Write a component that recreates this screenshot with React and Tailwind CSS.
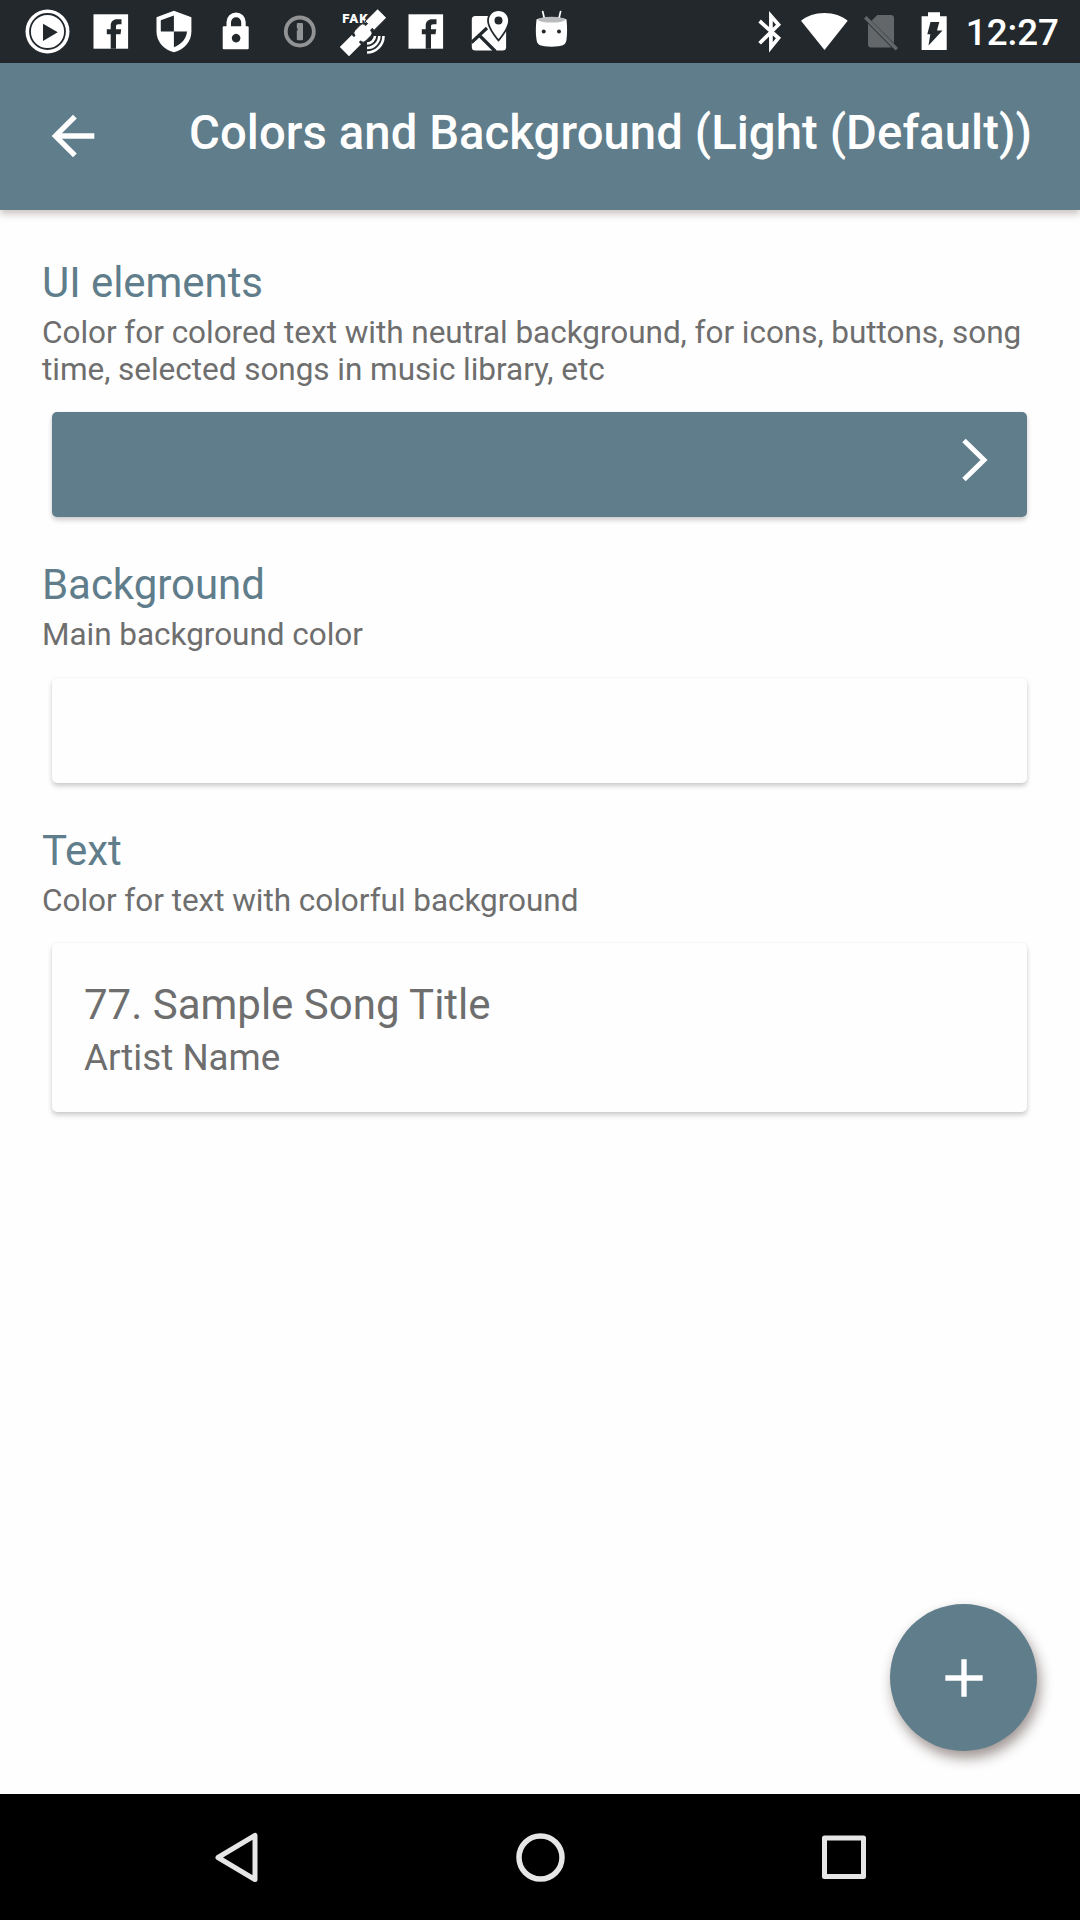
import React from "react";

// Status glyphs share the bar's coordinate space: x is the left edge of the slot.
function Glyph({ x, w = 63, className = "w-[63px]", children }) {
  return (
    <svg viewBox={`${x} 0 ${w} 63`} className={`h-[63px] shrink-0 ${className}`} fill="#fff">
      {children}
    </svg>
  );
}

function FacebookGlyph({ x }) {
  return (
    <Glyph x={x}>
      <g transform={`translate(${x + 14.5} 14.3)`}>
        <rect x="0" y="0" width="34.6" height="34.4" />
        <path
          d="M17.200 34.400V20H13.300v-5h3.900v-3.600c0-4.200 2.600-6.500 6.500-6.500h4.300v5h-3c-1.900 0-2.500.8-2.500 2.400V15h5.200l-.7 5h-4.500v14.400z"
          fill="#22282c"
        />
      </g>
    </Glyph>
  );
}

function StatusBar() {
  return (
    <div className="flex h-[63px] items-center bg-[#22282c] pl-[15.5px] pr-[21px]">
      <Glyph x={15.5}>
        <circle cx="47" cy="31.500" r="22" />
        <circle cx="47" cy="31.500" r="17.500" fill="none" stroke="#22282c" strokeWidth="1.800" />
        <path d="M42.500 23.700v17.200L57.300 32.300z" fill="#22282c" />
      </Glyph>
      <FacebookGlyph x={78.5} />
      <Glyph x={141.5}>
        <path d="M173.400 10.800 156 17.300v14.200c0 9.600 6.600 18 17.400 20.800 10.800-2.800 17.500-11.200 17.500-20.800V17.300z" />
        <path d="M173.400 15.600V31.600H160.300V20.300zM173.400 31.600h13.100c-.5 6.900-5.400 13-13.100 15.600z" fill="#22282c" />
      </Glyph>
      <Glyph x={204.5}>
        <path
          fillRule="evenodd"
          d="M226 26.300v-4.200a9.600 9.600 0 0 1 19.200 0v4.200h2a1 1 0 0 1 1 1v20.900a1 1 0 0 1-1 1h-24a1 1 0 0 1-1-1V27.300a1 1 0 0 1 1-1zm4.500 0h10.200v-4a5.100 5.100 0 0 0-10.200 0zM235.600 33.800a4.300 4.300 0 1 0 .01 0z"
        />
      </Glyph>
      <Glyph x={267.5}>
        <circle cx="299.300" cy="31.500" r="14" fill="none" stroke="#919395" strokeWidth="3.800" />
        <rect x="296.300" y="23" width="6.200" height="17.200" rx="1" fill="#919395" />
        <path d="M296.300 28.200v2.300" stroke="#22282c" strokeWidth="1.600" />
      </Glyph>
      <Glyph x={330.5}>
        <text x="341.700" y="23" fontSize="13.200" fontWeight="900" letterSpacing="1.100" fontFamily="Roboto, sans-serif">
          FAK
        </text>
        <g transform="translate(363 32.5) rotate(-45)">
          <rect x="-27" y="-6.500" width="17" height="13" />
          <rect x="9" y="-7" width="18" height="13" stroke="#22282c" strokeWidth="1" />
          <rect x="-8" y="-7.500" width="14.500" height="15" rx="3.500" stroke="#22282c" strokeWidth=".8" />
          <path d="M-11-3.500h4v7h-4zM5-3h5v6H5z" />
        </g>
        <g fill="none" stroke="#fff" strokeWidth="2.600">
          <path d="M366.500 43.500a8 8 0 0 0 8-7.500M366.500 48a12.300 12.300 0 0 0 12.300-12M366.500 52.500a16.500 16.500 0 0 0 16.500-16.500" />
        </g>
      </Glyph>
      <FacebookGlyph x={393.5} />
      <Glyph x={456.5}>
        <rect x="471.300" y="16" width="34.300" height="34.600" rx="3.500" />
        <path d="m471 42.500 15.500-14.500M479 35.500l16 16" fill="none" stroke="#22282c" strokeWidth="3.200" />
        <path
          d="M498 11c-5.500 0-9.600 4.200-9.600 9.500 0 7.500 9.600 18.500 9.600 18.500s9.600-11 9.600-18.500c0-5.300-4.100-9.500-9.600-9.500z"
          stroke="#22282c"
          strokeWidth="3.600"
          paintOrder="stroke"
        />
        <circle cx="498" cy="20.500" r="4" fill="#22282c" />
      </Glyph>
      <Glyph x={520}>
        <path d="M542.700 11.500 544.500 19M560.600 11.500 558.800 19" stroke="#fff" strokeWidth="1.700" strokeLinecap="round" />
        <path d="M536.500 19.500c5-3 25.500-3 30 0 .8 8 .8 14 0 20-.6 5.500-4 7.200-15 7.200s-14.400-1.700-15-7.200c-.9-6-.9-12 0-20z" />
        <ellipse cx="551.600" cy="19.700" rx="13.600" ry="2.900" fill="#b9bbbc" />
        <circle cx="543.700" cy="31.600" r="2" fill="#22282c" />
        <circle cx="559" cy="31.600" r="2" fill="#22282c" />
      </Glyph>

      <div className="ml-auto flex items-center">
        <Glyph x={756} w={28} className="mr-[14px] w-[28px]">
          <path
            d="m759.600 21 18.900 17-7.600 9.300V16l7.600 8.700-18.900 18.500"
            fill="none"
            stroke="#fff"
            strokeWidth="3.700"
          />
        </Glyph>
        <Glyph x={798} w={54} className="mr-[10px] w-[54px]">
          <path d="M824.500 50 801 20.800c6-5 14-7.900 23.400-7.900s17.400 2.900 23.300 7.900z" />
        </Glyph>
        <Glyph x={862} w={38} className="mr-[18px] w-[38px]">
          <path
            d="M894 17.800v25.500L871.500 20.800 877.300 15H891a3 3 0 0 1 3 2.800zM868 23.500 891.500 47.500H871a3 3 0 0 1-3-3zM866.500 16 898 48l-2.500 2.500L864 18.500z"
            fill="#63676a"
          />
        </Glyph>
        <Glyph x={918} w={32} className="mr-[16px] w-[32px]">
          <path d="M928 12.300h12v3.900h6.700V50h-25.100V16.200h6.400z" />
          <path d="M930.500 22h8.800l-2.300 8.500h5.500L928.500 45.500l1.800-11.300h-3z" fill="#22282c" />
        </Glyph>
        <span className="mt-[4px] text-[36.750px] font-medium leading-none text-white">12:27</span>
      </div>
    </div>
  );
}

function AppBar() {
  return (
    <header className="z-10 flex h-[147px] items-center bg-[#607d8b] pl-[41px] shadow-[0_4px_7px_rgba(50,20,10,0.25)]">
      <svg viewBox="0 0 24 24" className="mb-px mr-[84px] size-[64px] shrink-0 fill-white">
        <path d="M20 11H7.830l5.590-5.590L12 4l-8 8 8 8 1.410-1.410L7.830 13H20v-2z" />
      </svg>
      <h1 className="mb-[7px] whitespace-nowrap text-[47.250px] font-medium leading-[56px] tracking-[0.07px] text-white">
        Colors and Background (Light (Default))
      </h1>
    </header>
  );
}

function Setting({ title, text, className = "", children }) {
  return (
    <section className={className}>
      <h2 className="text-[42px] leading-[50px] tracking-[-0.05px] text-[#607d8b]">{title}</h2>
      <p className="mt-[6px] text-[31.500px] leading-[37px] tracking-[-0.035px] text-[#6e6e6e]">{text}</p>
      {children}
    </section>
  );
}

const cardShadow = "ml-[10px] mr-[11px] rounded-[5px] shadow-[0_3px_5px_rgba(0,0,0,0.2),0_0_2px_rgba(0,0,0,0.06)]";

export default function App() {
  return (
    <div className="flex h-[1920px] w-[1080px] flex-col overflow-hidden bg-[#fefefe] font-['Roboto',sans-serif]">
      <StatusBar />
      <AppBar />
      <main className="relative flex-1 px-[42px] pt-[48px]">
        <Setting
          title="UI elements"
          text="Color for colored text with neutral background, for icons, buttons, song time, selected songs in music library, etc"
        >
          <div className={`mt-[24px] flex h-[105px] justify-end bg-[#607d8b] pr-[21px] ${cardShadow}`}>
            <svg viewBox="0 0 64 64" className="mt-[16px] size-[64px]" fill="none" stroke="#fff" strokeWidth="5">
              <path d="M22 12.500 42 32 22 51.500" />
            </svg>
          </div>
        </Setting>
        <Setting title="Background" text="Main background color" className="mt-[43px]">
          <div className={`mt-[25px] h-[105px] bg-[#fefefe] ${cardShadow}`} />
        </Setting>
        <Setting title="Text" text="Color for text with colorful background" className="mt-[43px]">
          <div className={`mt-[24px] h-[169px] bg-[#fefefe] pl-[32px] pt-[37px] text-[#6e6e6e] ${cardShadow}`}>
            <div className="text-[42px] leading-[50px]">77. Sample Song Title</div>
            <div className="mt-[6px] text-[36.750px] leading-[43px]">Artist Name</div>
          </div>
        </Setting>
        <button className="absolute bottom-[43px] right-[43px] flex size-[147px] items-center justify-center rounded-full bg-[#607d8b] shadow-[3px_7px_13px_rgba(40,20,15,0.45)]">
          <svg viewBox="0 0 24 24" className="size-[64px] fill-white">
            <path d="M19 13h-6v6h-2v-6H5v-2h6V5h2v6h6v2z" />
          </svg>
        </button>
      </main>
      <nav className="flex h-[126px] items-center justify-between bg-black pl-[212px] pr-[211px]">
        <svg viewBox="0 0 50 56" className="h-[56px] w-[50px]" fill="none" stroke="#e6e6e6" strokeWidth="5" strokeLinejoin="round">
          <path d="M6 28.500 43 6.500v44z" />
        </svg>
        <svg viewBox="0 0 56 56" className="h-[56px] w-[56px]" fill="none" stroke="#e6e6e6" strokeWidth="5.500">
          <circle cx="27.500" cy="28.500" r="21.500" />
        </svg>
        <svg viewBox="0 0 50 56" className="h-[56px] w-[50px]" fill="none" stroke="#e6e6e6" strokeWidth="5" strokeLinejoin="round">
          <rect x="5.500" y="9" width="39" height="38.500" />
        </svg>
      </nav>
    </div>
  );
}
